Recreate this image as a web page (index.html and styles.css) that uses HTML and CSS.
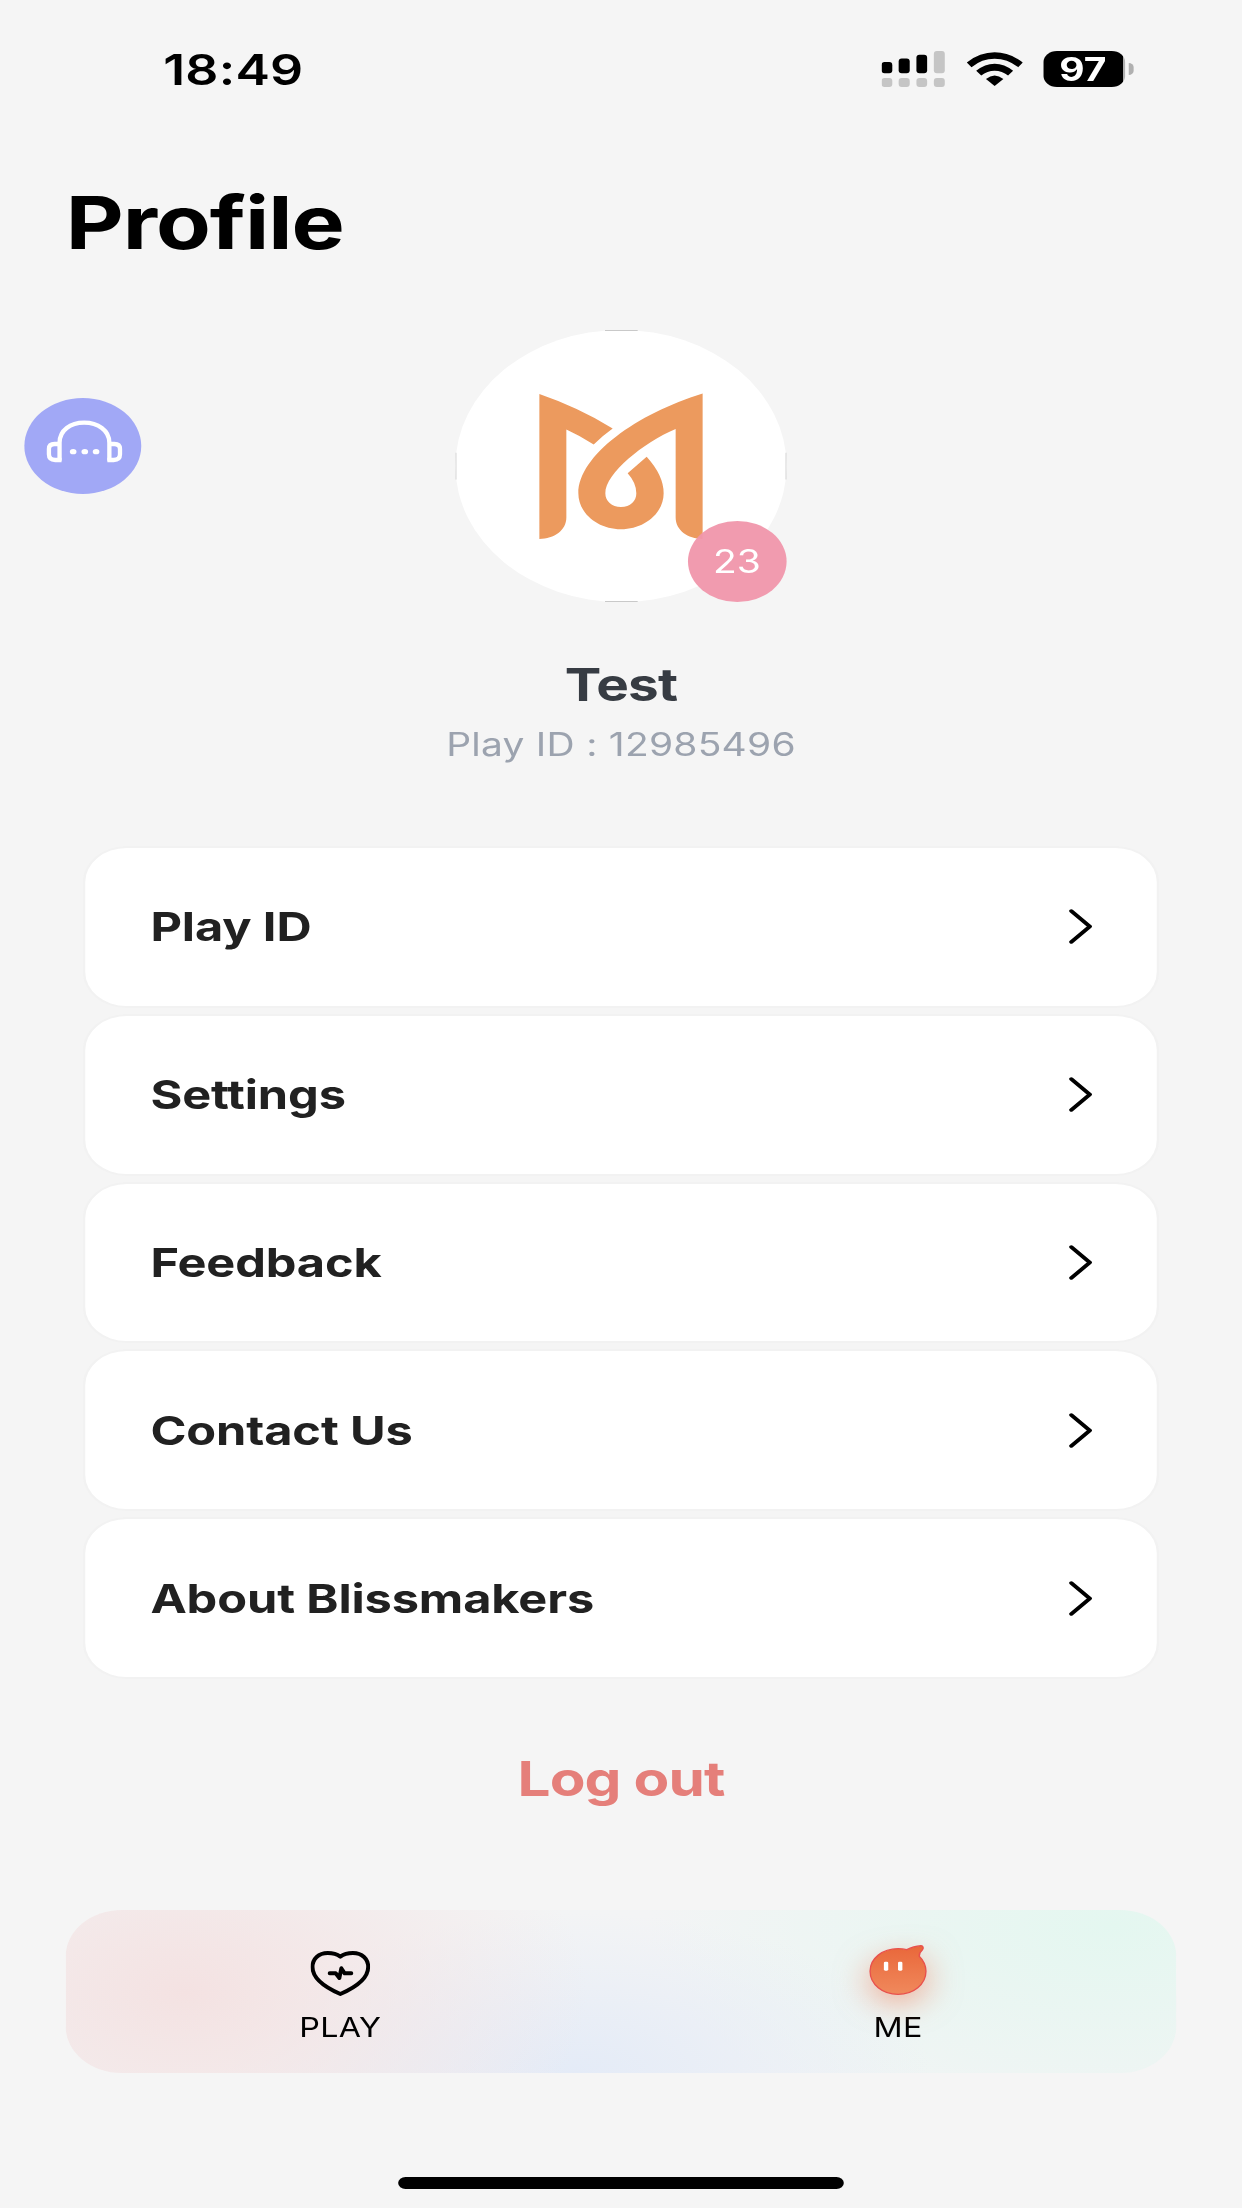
FILE: index.html
```html
<!DOCTYPE html>
<html lang="en">
<head>
    <meta charset="UTF-8">
    <meta name="viewport" content="width=device-width, initial-scale=1.0">
    <title>Profile</title>
    <link rel="stylesheet" href="styles.css">
</head>
<body>
<div class="screen">

    <!-- Status bar -->
    <div class="status-bar">
        <div class="time">18:49</div>
        <div class="status-icons">
            <svg class="signal" viewBox="126 91 189 107" preserveAspectRatio="none">
                <g fill="#000">
                    <rect x="126" y="124" width="32" height="33" rx="9"/>
                    <rect x="177" y="113" width="33" height="44" rx="9"/>
                    <rect x="230" y="102" width="32" height="55" rx="9"/>
                </g>
                <g fill="#c5c5c5">
                    <rect x="282" y="91" width="33" height="66" rx="9"/>
                    <rect x="126" y="171" width="32" height="27" rx="9"/>
                    <rect x="177" y="171" width="33" height="27" rx="9"/>
                    <rect x="230" y="171" width="32" height="27" rx="9"/>
                    <rect x="282" y="171" width="33" height="27" rx="9"/>
                </g>
            </svg>
            <svg class="wifi" viewBox="379 93 167 101" preserveAspectRatio="none">
                <path d="M379 124Q418 94 462 94T546 124L532 138Q500 113 462 113T393 138Z"/>
                <path d="M407 149Q433 128 462 128T517 149L502 163Q484 149 462 149T422 163Z"/>
                <path d="M436 173Q462 152 488 173L462 194Z"/>
            </svg>
            <div class="battery"><span>97</span></div>
            <div class="battery-tip"></div>
        </div>
    </div>

    <h1 class="title">Profile</h1>

    <!-- Floating support button -->
    <div class="support">
        <svg viewBox="42 54 352 288" preserveAspectRatio="none" fill="none" stroke="#fff" stroke-width="13">
            <path d="M148 242V188C148 150 181 128 222 128S298 150 298 188V242"/>
            <path d="M148 192H133Q116 192 116 207V223Q116 240 135 240H154"/>
            <path d="M298 192H313Q330 192 330 207V223Q330 240 311 240H292"/>
            <g fill="#fff" stroke="none">
                <ellipse cx="189" cy="215" rx="10" ry="8"/>
                <ellipse cx="224" cy="215" rx="10" ry="8"/>
                <ellipse cx="258" cy="215" rx="10" ry="8"/>
            </g>
        </svg>
    </div>

    <!-- User info -->
    <div class="user">
        <div class="avatar">
            <svg viewBox="76 60 994 815" preserveAspectRatio="none" fill="#ec9a5e">
                <path d="M328 252Q445 292 548 355Q516 378 491 403Q449 376 409 358V622C409 660 373 686 328 686Z"/>
                <path d="M818 250V686C773 686 737 660 737 622V357C640 398 526 490 526 549C526 573 545 590 573 590S619 573 619 549Q619 518 593 489L650 440Q701 496 701 549C701 609 643 657 573 657S445 609 445 549C445 435 622 310 818 250Z"/>
                <!-- thin edge of the photo at the four sides -->
                <path d="M525 61.5H623M525 873.5H623M77.5 428V508M1068.5 428V508" stroke="#c9c9c9" stroke-width="3"/>
            </svg>
            <div class="level">23</div>
        </div>
        <div class="name">Test</div>
        <div class="play-id">Play ID : 12985496</div>
    </div>

    <!-- Menu -->
    <div class="menu">
        <div class="menu-item">
            <span>Play ID</span>
            <svg class="arrow" viewBox="0 0 19 35"><path d="M1.8 2L17 17.5L1.8 33"/></svg>
        </div>
        <div class="menu-item">
            <span>Settings</span>
            <svg class="arrow" viewBox="0 0 19 35"><path d="M1.8 2L17 17.5L1.8 33"/></svg>
        </div>
        <div class="menu-item">
            <span>Feedback</span>
            <svg class="arrow" viewBox="0 0 19 35"><path d="M1.8 2L17 17.5L1.8 33"/></svg>
        </div>
        <div class="menu-item">
            <span>Contact Us</span>
            <svg class="arrow" viewBox="0 0 19 35"><path d="M1.8 2L17 17.5L1.8 33"/></svg>
        </div>
        <div class="menu-item">
            <span>About Blissmakers</span>
            <svg class="arrow" viewBox="0 0 19 35"><path d="M1.8 2L17 17.5L1.8 33"/></svg>
        </div>
    </div>

    <div class="logout">Log out</div>

    <!-- Bottom tabs -->
    <div class="tab-bar">
        <div class="tab">
            <svg class="tab-icon heart" viewBox="94 92 180 135" preserveAspectRatio="none" fill="none" stroke="#000" stroke-width="12" stroke-linejoin="round" stroke-linecap="round">
                <path d="M184 109C172 100 160 98 146 98C118 98 100 116 100 140C100 174 140 202 184 221C228 202 268 174 268 140C268 116 250 98 222 98C208 98 196 100 184 109Z"/>
                <path d="M152 159H170L181 173L187 144L197 159H217"/>
            </svg>
            <span>PLAY</span>
        </div>
        <div class="tab">
            <svg class="tab-icon blob" viewBox="148 136 170 150" preserveAspectRatio="none">
                <defs>
                    <linearGradient id="blobFill" x1="0" y1="0" x2="0" y2="1">
                        <stop offset="0" stop-color="#e9673a"/>
                        <stop offset="1" stop-color="#f0895c"/>
                    </linearGradient>
                </defs>
                <path d="M259 150Q279 139 301 138C308 138 310 145 305 151Q295 160 296 170Q316 190 316 215C316 254 279 284 233 284S150 254 150 215S187 147 233 147Q247 147 259 150Z" fill="url(#blobFill)" stroke="#e8504c" stroke-width="4"/>
                <rect x="191" y="186" width="13" height="27" rx="4" fill="#fff"/>
                <rect x="233" y="186" width="13" height="27" rx="4" fill="#fff"/>
            </svg>
            <span>ME</span>
        </div>
    </div>

    <div class="home-indicator"></div>
</div>
</body>
</html>
```
FILE: styles.css
```css
* { box-sizing: border-box; }

body {
    margin: 0;
    width: 1242px;
    height: 2208px;
    overflow: hidden;
    background: #f5f5f5;
    font-family: Inter, "Liberation Sans", sans-serif;
}
svg { display: block; }

/* The screen is laid out 1020 wide and stretched to the window */
.screen {
    position: relative;
    display: flex;
    flex-direction: column;
    width: 1020px;
    height: 2208px;
    transform: scaleX(1.217647);
    transform-origin: 0 0;
}

/* Status bar */
.status-bar {
    display: flex;
    justify-content: space-between;
    align-items: center;
    height: 137px;
    padding: 0 89.5px 0 134px;
}
.time {
    padding-top: 2px;
    font-size: 42.5px;
    font-weight: 600;
    letter-spacing: 0.2px;
}
.status-icons {
    display: flex;
    align-items: center;
}
.signal { width: 52px; height: 36px; margin-right: 17.5px; }
.wifi { width: 46px; height: 34px; margin-right: 17px; }
.battery {
    width: 67.5px;
    height: 36px;
    padding-right: 2px;
    border-radius: 11px;
    background: linear-gradient(90deg, #000 65px, #b0b0b0 65px);
    color: #fff;
    font-size: 32px;
    font-weight: 700;
    line-height: 37px;
    text-align: center;
}
.battery-tip {
    width: 4px;
    height: 12px;
    margin-left: 2.5px;
    border-radius: 0 4px 4px 0;
    background: #b0b0b0;
}

.title {
    margin: 41px 0 0 54px;
    font-size: 73.5px;
    font-weight: 700;
    line-height: 90px;
    letter-spacing: -0.85px;
}

/* Floating support button */
.support {
    position: absolute;
    top: 398px;
    left: 20px;
}
.support svg {
    width: 96px;
    height: 96px;
    border-radius: 50%;
    background: #a1a8f6;
}

/* User info */
.user {
    display: flex;
    flex-direction: column;
    align-items: center;
    margin-top: 62px;
}
.avatar {
    position: relative;
    width: 272px;
    height: 272px;
    border-radius: 50%;
    background: #fff;
}
.avatar svg {
    width: 272px;
    height: 272px;
}
.level {
    position: absolute;
    right: 0;
    bottom: 0;
    width: 81.5px;
    height: 81.5px;
    border-radius: 50%;
    background: rgba(240, 150, 171, 0.95);
    color: #fff;
    font-size: 32px;
    line-height: 81px;
    text-align: center;
}
.name {
    margin-top: 55px;
    color: #373c43;
    font-size: 45px;
    font-weight: 700;
    line-height: 56px;
    letter-spacing: -0.7px;
}
.play-id {
    margin-top: 12px;
    color: #9ca3af;
    font-size: 32px;
    line-height: 40px;
    letter-spacing: 0.2px;
}

/* Menu */
.menu {
    display: flex;
    flex-direction: column;
    gap: 10px;
    margin: 83px 70px 0;
}
.menu-item {
    display: flex;
    justify-content: space-between;
    align-items: center;
    height: 157.8px;
    padding: 0 53px 0 53.5px;
    border-radius: 34px;
    background: #fff;
    box-shadow: 0 0 0 2px #f2f2f2;
    color: #212121;
    font-size: 40px;
    font-weight: 700;
    letter-spacing: -0.1px;
}
.arrow {
    width: 19px;
    height: 35px;
    fill: none;
    stroke: #000;
    stroke-width: 3.5;
    stroke-linecap: round;
    stroke-linejoin: round;
}

.logout {
    margin-top: 72px;
    color: #e57f7a;
    font-size: 48px;
    font-weight: 700;
    line-height: 60px;
    letter-spacing: -0.75px;
    text-align: center;
}

/* Bottom tabs */
.tab-bar {
    display: flex;
    gap: 337px;
    height: 163px;
    margin: 101px 54px 0;
    padding-left: 165px;
    border-radius: 46px;
    background:
        radial-gradient(ellipse 330px 240px at 98px 82px, #f4e2e2, rgba(244, 226, 226, 0)),
        radial-gradient(ellipse 290px 160px at 420px 163px, #e4ebf7, rgba(228, 235, 247, 0)),
        radial-gradient(ellipse 380px 230px at 860px 16px, #e4f7f0, rgba(228, 247, 240, 0)),
        #f3f4f5;
}
.tab {
    display: flex;
    flex-direction: column;
    align-items: center;
    width: 121px;
    padding-top: 35px;
    color: #000;
    font-size: 26.5px;
    line-height: 34px;
    letter-spacing: 0.3px;
}
.heart { width: 49px; height: 45px; margin: 6px 0 14px; }
.blob {
    width: 47px;
    height: 50px;
    margin-bottom: 15px;
    overflow: visible;
    filter: drop-shadow(0 10px 14px rgba(240, 110, 70, 0.5));
}

.home-indicator {
    width: 366px;
    height: 12px;
    margin: 104px auto 0;
    border-radius: 6px;
    background: #000;
}
```
